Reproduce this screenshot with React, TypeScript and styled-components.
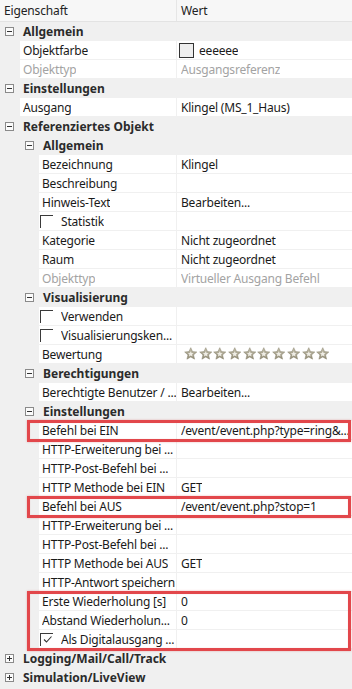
import React from "react";
import styled, { createGlobalStyle } from "styled-components";

const GlobalStyle = createGlobalStyle`
  html, body {
    margin: 0;
    padding: 0;
    background: #f0f0f0;
  }
  body {
    font-family: "Noto Sans", "DejaVu Sans", sans-serif;
    font-size: 12px;
    color: #1a1a1a;
  }
`;

interface Item {
  kind: "cat" | "prop";
  level: number;
  name: string;
  value?: string;
  disabled?: boolean;
  check?: "on" | "off";
  collapsed?: boolean;
  swatch?: string;
  stars?: boolean;
}

const cat = (level: number, name: string, collapsed = false): Item => ({
  kind: "cat",
  level,
  name,
  collapsed,
});
const prop = (level: number, name: string, value = "", extra: Partial<Item> = {}): Item => ({
  kind: "prop",
  level,
  name,
  value,
  ...extra,
});

// groups of rows; "mark" gets the red annotation frame
const groups: { mark?: boolean; rows: Item[] }[] = [
  {
    rows: [
      cat(0, "Allgemein"),
      prop(1, "Objektfarbe", "eeeeee", { swatch: "#eeeeee" }),
      prop(1, "Objekttyp", "Ausgangsreferenz", { disabled: true }),
      cat(0, "Einstellungen"),
      prop(1, "Ausgang", "Klingel (MS_1_Haus)"),
      cat(0, "Referenziertes Objekt"),
      cat(1, "Allgemein"),
      prop(2, "Bezeichnung", "Klingel"),
      prop(2, "Beschreibung"),
      prop(2, "Hinweis-Text", "Bearbeiten..."),
      prop(2, "Statistik", "", { check: "off" }),
      prop(2, "Kategorie", "Nicht zugeordnet"),
      prop(2, "Raum", "Nicht zugeordnet"),
      prop(2, "Objekttyp", "Virtueller Ausgang Befehl", { disabled: true }),
      cat(1, "Visualisierung"),
      prop(2, "Verwenden", "", { check: "off" }),
      prop(2, "Visualisierungsken...", "", { check: "off" }),
      prop(2, "Bewertung", "", { stars: true }),
      cat(1, "Berechtigungen"),
      prop(2, "Berechtigte Benutzer / ...", "Bearbeiten..."),
      cat(1, "Einstellungen"),
    ],
  },
  { mark: true, rows: [prop(2, "Befehl bei EIN", "/event/event.php?type=ring&...")] },
  {
    rows: [
      prop(2, "HTTP-Erweiterung bei ..."),
      prop(2, "HTTP-Post-Befehl bei ..."),
      prop(2, "HTTP Methode bei EIN", "GET"),
    ],
  },
  { mark: true, rows: [prop(2, "Befehl bei AUS", "/event/event.php?stop=1")] },
  {
    rows: [
      prop(2, "HTTP-Erweiterung bei ..."),
      prop(2, "HTTP-Post-Befehl bei ..."),
      prop(2, "HTTP Methode bei AUS", "GET"),
      prop(2, "HTTP-Antwort speichern"),
    ],
  },
  {
    mark: true,
    rows: [
      prop(2, "Erste Wiederholung [s]", "0"),
      prop(2, "Abstand Wiederholun...", "0"),
      prop(2, "Als Digitalausgang ...", "", { check: "on" }),
    ],
  },
  {
    rows: [cat(0, "Logging/Mail/Call/Track", true), cat(0, "Simulation/LiveView", true)],
  },
];

const Grid = styled.div`
  width: 352px;
  height: 689px;
  overflow: hidden;
  background: #f0f0f0;
`;

const Header = styled.div`
  display: flex;
  height: 21px;
  background: #f7f7f7;
  border-bottom: 1px solid #e3e3e3;
`;

const HeaderCell = styled.div<{ $w?: number }>`
  ${(p) => (p.$w ? `width: ${p.$w}px;` : "flex: 1;")}
  display: flex;
  align-items: center;
  padding-left: 4px;
  box-sizing: border-box;
  color: #222;
  letter-spacing: -0.15px;
  border-right: 1px solid #e6e6e6;
  &:last-child {
    border-right: none;
  }
`;

const Row = styled.div`
  display: flex;
  height: 19px;
`;

const CatRow = styled(Row)<{ $level: number }>`
  align-items: center;
  padding-left: ${(p) => 5 + p.$level * 20}px;
  font-weight: 700;
  color: #2b2b2b;
`;

const Expander = styled.span`
  position: relative;
  width: 9px;
  height: 9px;
  box-sizing: border-box;
  border: 1px solid #8a8a8a;
  background: #fbfbfb;
  margin-right: 9px;
  flex-shrink: 0;
`;

const Bar = styled.span<{ $vertical?: boolean }>`
  position: absolute;
  background: #333;
  ${(p) =>
    p.$vertical
      ? "left: 3px; top: 1px; width: 1px; height: 5px;"
      : "left: 1px; top: 3px; width: 5px; height: 1px;"}
`;

const Indent = styled.div<{ $level: number }>`
  width: ${(p) => (p.$level === 1 ? 20 : 39)}px;
  flex-shrink: 0;
`;

const Cell = styled.div<{ $disabled?: boolean }>`
  background: #fff;
  border-bottom: 1px solid #f0f0f0;
  display: flex;
  align-items: center;
  padding-left: 3px;
  box-sizing: border-box;
  overflow: hidden;
  letter-spacing: -0.2px;
  color: ${(p) => (p.$disabled ? "#a3a3a3" : "#1a1a1a")};
`;

const NameCell = styled(Cell)`
  flex: 1;
  border-right: 1px solid #f0f0f0;
`;

const ValueCell = styled(Cell)`
  width: 175px;
  flex-shrink: 0;
  padding-left: 4px;
`;

const Label = styled.span<{ $ellipsis?: boolean }>`
  min-width: 0;
  white-space: nowrap;
  overflow: hidden;
  text-overflow: ${(p) => (p.$ellipsis ? "ellipsis" : "clip")};
`;

const CheckBox = styled.span`
  position: relative;
  width: 13px;
  height: 13px;
  box-sizing: border-box;
  border-left: 1px solid #3a3a3a;
  border-top: 1px solid #3a3a3a;
  margin-left: -2px;
  margin-right: 8px;
  flex-shrink: 0;
  display: flex;
  align-items: center;
  justify-content: center;
`;

const Swatch = styled.span<{ $color: string }>`
  width: 15px;
  height: 15px;
  box-sizing: border-box;
  border: 1px solid #333;
  background: ${(p) => p.$color};
  margin-left: -2px;
  margin-right: 5px;
  flex-shrink: 0;
`;

const Stars = styled.div`
  display: flex;
  gap: 1.2px;
  margin-left: 3px;
`;

const Highlight = styled.div`
  position: relative;
  &::after {
    content: "";
    position: absolute;
    top: -1px;
    bottom: -2px;
    left: 27px;
    right: 1px;
    border: 3px solid #e2474b;
    box-shadow: 0 0 2px rgba(200, 60, 60, 0.35), inset 0 0 1px rgba(200, 60, 60, 0.35);
    pointer-events: none;
  }
`;

const Star: React.FC = () => (
  <svg width="13.5" height="13.5" viewBox="0 0 24 24">
    <defs>
      <linearGradient id="sg" x1="0" y1="0" x2="0" y2="1">
        <stop offset="0" stopColor="#c6c2b0" />
        <stop offset="1" stopColor="#928c76" />
      </linearGradient>
    </defs>
    <path
      d="M12 1.2l3.2 7 7.6.7-5.8 5.1 1.8 7.6L12 17.7l-6.8 3.9 1.8-7.6-5.8-5.1 7.6-.7z"
      fill="url(#sg)"
      stroke="#8a846d"
      strokeWidth="0.9"
    />
    <path d="M12 7.5l1.5 3.3 3.6.3-2.7 2.4.8 3.5L12 15.2l-3.2 1.8.8-3.5-2.7-2.4 3.6-.3z" fill="#efede5" />
  </svg>
);

const Check: React.FC = () => (
  <svg width="11" height="11" viewBox="0 0 11 11">
    <path d="M2 5.5l2.5 2.5L9.5 2.5" fill="none" stroke="#333" strokeWidth="1.1" />
  </svg>
);

const renderRow = (it: Item, key: number) => {
  if (it.kind === "cat") {
    return (
      <CatRow key={key} $level={it.level}>
        <Expander>
          <Bar />
          {it.collapsed && <Bar $vertical />}
        </Expander>
        {it.name}
      </CatRow>
    );
  }
  return (
    <Row key={key}>
      <Indent $level={it.level} />
      <NameCell $disabled={it.disabled}>
        {it.check && <CheckBox>{it.check === "on" && <Check />}</CheckBox>}
        <Label>{it.name}</Label>
      </NameCell>
      <ValueCell $disabled={it.disabled}>
        {it.swatch && <Swatch $color={it.swatch} />}
        {it.stars ? (
          <Stars>
            {Array.from({ length: 10 }).map((_, i) => (
              <Star key={i} />
            ))}
          </Stars>
        ) : (
          <Label $ellipsis>{it.value}</Label>
        )}
      </ValueCell>
    </Row>
  );
};

const App: React.FC = () => {
  let k = 0;
  return (
    <>
      <GlobalStyle />
      <Grid>
        <Header>
          <HeaderCell $w={177}>Eigenschaft</HeaderCell>
          <HeaderCell>Wert</HeaderCell>
        </Header>
        {groups.map((g, gi) =>
          g.mark ? (
            <Highlight key={gi}>{g.rows.map((r) => renderRow(r, k++))}</Highlight>
          ) : (
            <React.Fragment key={gi}>{g.rows.map((r) => renderRow(r, k++))}</React.Fragment>
          )
        )}
      </Grid>
    </>
  );
};

export default App;
